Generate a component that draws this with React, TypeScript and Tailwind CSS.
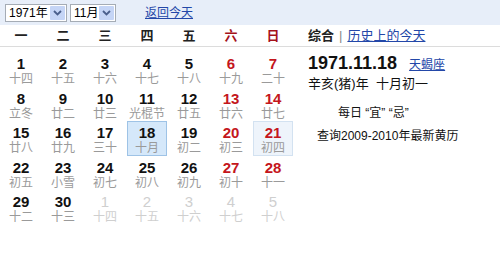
const font = "font-['Liberation_Sans','Noto_Sans_CJK_SC',sans-serif]";

type Day = { n: number; l: string; kind?: "red" | "other"; sel?: "today" | "pick" };

const weeks: Day[][] = [
  [
    { n: 1, l: "十四" },
    { n: 2, l: "十五" },
    { n: 3, l: "十六" },
    { n: 4, l: "十七" },
    { n: 5, l: "十八" },
    { n: 6, l: "十九", kind: "red" },
    { n: 7, l: "二十", kind: "red" },
  ],
  [
    { n: 8, l: "立冬" },
    { n: 9, l: "廿二" },
    { n: 10, l: "廿三" },
    { n: 11, l: "光棍节" },
    { n: 12, l: "廿五" },
    { n: 13, l: "廿六", kind: "red" },
    { n: 14, l: "廿七", kind: "red" },
  ],
  [
    { n: 15, l: "廿八" },
    { n: 16, l: "廿九" },
    { n: 17, l: "三十" },
    { n: 18, l: "十月", sel: "pick" },
    { n: 19, l: "初二" },
    { n: 20, l: "初三", kind: "red" },
    { n: 21, l: "初四", kind: "red", sel: "today" },
  ],
  [
    { n: 22, l: "初五" },
    { n: 23, l: "小雪" },
    { n: 24, l: "初七" },
    { n: 25, l: "初八" },
    { n: 26, l: "初九" },
    { n: 27, l: "初十", kind: "red" },
    { n: 28, l: "十一", kind: "red" },
  ],
  [
    { n: 29, l: "十二" },
    { n: 30, l: "十三" },
    { n: 1, l: "十四", kind: "other" },
    { n: 2, l: "十五", kind: "other" },
    { n: 3, l: "十六", kind: "other" },
    { n: 4, l: "十七", kind: "other" },
    { n: 5, l: "十八", kind: "other" },
  ],
];

const weekdays = ["一", "二", "三", "四", "五", "六", "日"];

function FakeSelect({ label, width }: { label: string; width: string }) {
  return (
    <div className={`flex h-[18px] items-stretch border border-[#a5acb5] bg-white ${width}`}>
      <span className="flex flex-1 items-center whitespace-nowrap pl-[3px] text-[12px] leading-none text-black">
        {label}
      </span>
      <span className="m-[1px] flex w-[15px] shrink-0 items-center justify-center rounded-[1px] bg-[#c5d5f6]">
        <svg width="9" height="6" viewBox="0 0 9 6" aria-hidden>
          <path d="M1 1 L4.5 4.5 L8 1" fill="none" stroke="#4a5f8c" strokeWidth="1.8" />
        </svg>
      </span>
    </div>
  );
}

function DayCell({ d }: { d: Day }) {
  const numColor =
    d.kind === "red" ? "text-[#c4161c]" : d.kind === "other" ? "text-[#cfcfcf] font-normal" : "text-[#111]";
  const lunarColor = d.kind === "other" ? "text-[#cfcfcf]" : "text-[#9a9a9a]";
  const box =
    d.sel === "pick"
      ? "border-[#9ec3e6] bg-[#d5e8fa]"
      : d.sel === "today"
        ? "border-[#d3e2f1] bg-[#eef4fb]"
        : "border-transparent";
  return (
    <div className={`mx-auto flex h-[35px] w-[40px] flex-col items-center justify-center border pt-[3px] ${box}`}>
      <span className={`text-[15px] font-bold leading-[16px] ${numColor}`}>{d.n}</span>
      <span className={`text-[12px] leading-[14px] ${lunarColor}`}>{d.l}</span>
    </div>
  );
}

export default function App() {
  return (
    <div className={`h-[254px] w-[500px] overflow-hidden bg-white ${font}`}>
      <div className="flex h-[25px] items-center bg-[#e7eef9] pl-[5px]">
        <FakeSelect label="1971年" width="w-[62px]" />
        <div className="ml-[3px]">
          <FakeSelect label="11月" width="w-[46px]" />
        </div>
        <a href="#" className="ml-[29px] text-[12px] text-[#2347a8] underline">
          返回今天
        </a>
      </div>

      <div className="flex">
        <div className="w-[294px]">
          <div className="grid h-[22px] grid-cols-7 items-center border-b border-[#dcdcdc]">
            {weekdays.map((w, i) => (
              <span
                key={w}
                className={`text-center text-[13px] font-bold ${i >= 5 ? "text-[#a5121a]" : "text-[#222]"}`}
              >
                {w}
              </span>
            ))}
          </div>
          <div className="pt-[5px]">
            {weeks.map((wk, i) => (
              <div key={i} className="grid h-[34.6px] grid-cols-7 items-center">
                {wk.map((d, j) => (
                  <DayCell key={j} d={d} />
                ))}
              </div>
            ))}
          </div>
        </div>

        <div className="flex-1">
          <div className="flex h-[22px] items-center border-b border-[#dcdcdc] pl-[14px] text-[13px]">
            <span className="font-bold text-[#222]">综合</span>
            <span className="mx-[5px] text-[#888]">|</span>
            <a href="#" className="text-[13px] text-[#2347a8] underline">
              历史上的今天
            </a>
          </div>
          <div className="pl-[14px] pt-[3px]">
            <div className="flex items-baseline">
              <span className="text-[18px] font-bold leading-[26px] text-[#111]">1971.11.18</span>
              <a href="#" className="ml-[12px] text-[12px] text-[#2347a8] underline">
                天蝎座
              </a>
            </div>
            <p className="text-[13px] leading-[16px] text-[#111]">辛亥(猪)年&nbsp;&nbsp;十月初一</p>
            <p className="mt-[12px] pl-[30px] text-[12px] text-[#111]">每日 “宜” “忌”</p>
            <p className="mt-[5px] pl-[9px] text-[12px] text-[#111]">查询2009-2010年最新黄历</p>
          </div>
        </div>
      </div>
    </div>
  );
}
